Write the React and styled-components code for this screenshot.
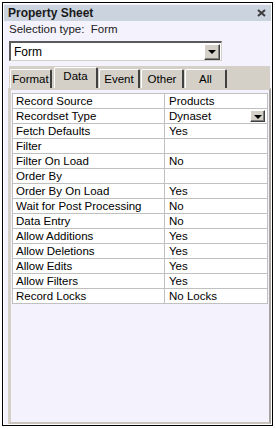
import React from "react";
import styled, { createGlobalStyle, css } from "styled-components";

const Global = createGlobalStyle`
  html, body { margin: 0; padding: 0; background: #ffffff; }
  body { font-family: "Liberation Sans", Arial, sans-serif; font-size: 11.5px; color: #000; }
`;

const Frame = styled.div`
  box-sizing: border-box;
  margin: 2px 0 0 2px;
  width: 271px;
  height: 424px;
  border: 1px solid #000;
  padding: 1px;
  background: #fff;
`;

const Content = styled.div`
  box-sizing: border-box;
  height: 100%;
  background: #f4f2fd;
  padding-top: 1px;
  display: flex;
  flex-direction: column;
`;

const TitleBar = styled.div`
  height: 16px;
  background: #cad3de;
  display: flex;
  align-items: center;
  justify-content: space-between;
  padding: 0 5px 0 4px;
`;

const Title = styled.span`
  font-weight: bold;
  font-size: 12px;
  color: #1a1a1a;
`;

const Close = styled.svg`
  width: 9px;
  height: 8px;
  display: block;
`;

const SelectionLabel = styled.div`
  padding: 1px 0 0 5px;
  height: 14px;
  line-height: 14px;
  color: #202020;
`;

const Combo = styled.div`
  box-sizing: border-box;
  margin: 5px 0 0 5px;
  width: 213px;
  height: 20px;
  background: #fff;
  border-top: 2px solid #5a5a5a;
  border-left: 2px solid #5a5a5a;
  border-right: 1px solid #d4d0c8;
  border-bottom: 1px solid #d4d0c8;
  display: flex;
  align-items: center;
  justify-content: space-between;
  padding: 0 1px 0 3px;
`;

const ComboText = styled.span`
  font-size: 12px;
`;

const DropButton = styled.div`
  box-sizing: border-box;
  width: ${(p) => p.$w || 15}px;
  height: ${(p) => p.$h || 15}px;
  background: #d4d0c8;
  border-top: 1px solid #fff;
  border-left: 1px solid #fff;
  border-right: 1px solid #404040;
  border-bottom: 1px solid #404040;
  box-shadow: inset -1px -1px 0 #808080;
  display: flex;
  align-items: center;
  justify-content: center;
`;

const Arrow = styled.span`
  width: 0;
  height: 0;
  border-left: 4px solid transparent;
  border-right: 4px solid transparent;
  border-top: 4px solid #000;
  margin-top: 1px;
`;

const TabStrip = styled.div`
  margin: 5px 1px 0 5px;
  height: 22px;
  background: #d4d0c8;
  display: flex;
  align-items: flex-end;
  padding-left: 1px;
`;

const Tab = styled.div`
  box-sizing: border-box;
  width: ${(p) => p.$w}px;
  height: 19px;
  background: #d4d0c8;
  border-top: 1px solid #fff;
  border-left: 1px solid #fff;
  border-right: 2px solid #404040;
  border-radius: 2px 2px 0 0;
  text-align: center;
  line-height: 17px;
  padding-top: 1px;
  margin-right: 1px;
  ${(p) =>
    p.$active &&
    css`
      height: 21px;
      line-height: 16px;
      padding-top: 0;
      margin-left: 1px;
    `}
`;

const Panel = styled.div`
  box-sizing: border-box;
  flex: 1;
  margin: 0 0 0 4px;
  border-left: 3px solid #d4d0c8;
  border-top: 2px solid #d4d0c8;
  border-right: 2px solid #a8a4a0;
  border-bottom: 2px solid #c8c4bc;
  padding: 3px 1px 0 1px;
`;

const Grid = styled.div`
  display: grid;
  grid-template-columns: 152px 1fr;
  border-top: 1px solid #c0c0c0;
  border-left: 1px solid #c0c0c0;
`;

const Cell = styled.div`
  box-sizing: border-box;
  height: 15px;
  line-height: 14px;
  background: #fff;
  border-right: 1px solid #c0c0c0;
  border-bottom: 1px solid #c0c0c0;
  padding-left: ${(p) => (p.$value ? 4 : 3)}px;
  display: flex;
  align-items: center;
  justify-content: space-between;
  white-space: nowrap;
  overflow: hidden;
`;

const CellButton = styled(DropButton)`
  margin-right: 2px;
`;

const tabs = [
  { name: "Format", w: 42 },
  { name: "Data", w: 44 },
  { name: "Event", w: 41 },
  { name: "Other", w: 43 },
  { name: "All", w: 42 },
];

const rows = [
  ["Record Source", "Products"],
  ["Recordset Type", "Dynaset", true],
  ["Fetch Defaults", "Yes"],
  ["Filter", ""],
  ["Filter On Load", "No"],
  ["Order By", ""],
  ["Order By On Load", "Yes"],
  ["Wait for Post Processing", "No"],
  ["Data Entry", "No"],
  ["Allow Additions", "Yes"],
  ["Allow Deletions", "Yes"],
  ["Allow Edits", "Yes"],
  ["Allow Filters", "Yes"],
  ["Record Locks", "No Locks"],
];

export default function App() {
  return (
    <>
      <Global />
      <Frame>
        <Content>
          <TitleBar>
            <Title>Property Sheet</Title>
            <Close viewBox="0 0 9 8">
              <path d="M1 1 L8 7 M8 1 L1 7" stroke="#3c3c3c" strokeWidth="2" />
            </Close>
          </TitleBar>
          <SelectionLabel>Selection type:&nbsp; Form</SelectionLabel>
          <Combo>
            <ComboText>Form</ComboText>
            <DropButton $w={16} $h={16}>
              <Arrow />
            </DropButton>
          </Combo>
          <TabStrip>
            {tabs.map((t) => (
              <Tab key={t.name} $w={t.w} $active={t.name === "Data"}>
                {t.name}
              </Tab>
            ))}
          </TabStrip>
          <Panel>
            <Grid>
              {rows.map(([label, value, drop]) => (
                <React.Fragment key={label}>
                  <Cell>{label}</Cell>
                  <Cell $value>
                    <span>{value}</span>
                    {drop && (
                      <CellButton $w={15} $h={12}>
                        <Arrow />
                      </CellButton>
                    )}
                  </Cell>
                </React.Fragment>
              ))}
            </Grid>
          </Panel>
        </Content>
      </Frame>
    </>
  );
}
